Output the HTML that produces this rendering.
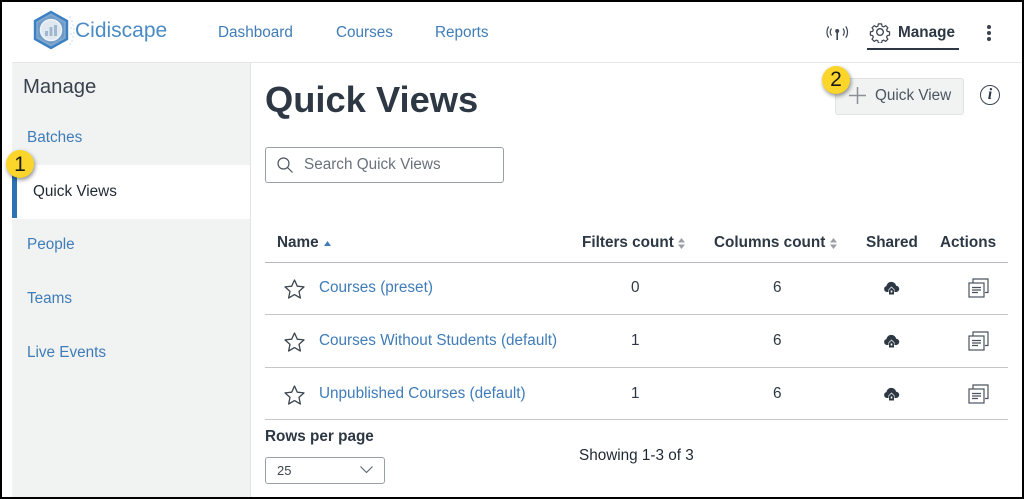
<!DOCTYPE html>
<html><head><meta charset="utf-8">
<style>
html,body{margin:0;padding:0;background:#fff}
#p{position:relative;width:1024px;height:499px;overflow:hidden;background:#fff;font-family:"Liberation Sans",sans-serif;color:#2d3844;font-size:15.3px}
#p div,#p svg{position:absolute}
.t{white-space:nowrap;line-height:18px}
.l{color:#3f7cb8}
.b{font-weight:bold;color:#2d3844}
.h{position:absolute;left:265px;width:743px;height:1px;background:#c4c6c9}
</style></head><body>
<div id="p">
<div style="left:12px;top:63px;width:238px;height:436px;background:#f1f3f3"></div>
<div style="left:12px;top:62px;width:1012px;height:1px;background:#e6e8e8"></div>
<div style="left:250px;top:63px;width:1px;height:436px;background:#e2e4e4"></div>
<div style="left:12px;top:165px;width:238px;height:54px;background:#fff"></div>
<div style="left:12px;top:165px;width:5px;height:53px;background:#2c72b5"></div>

<svg style="left:30px;top:8px" width="46" height="44" viewBox="0 0 46 44">
<g fill="#c3d9ec"><circle cx="40" cy="9" r=".8"/><circle cx="42" cy="13" r=".8"/><circle cx="43" cy="17" r=".8"/><circle cx="44" cy="21" r=".8"/><circle cx="44" cy="25" r=".8"/><circle cx="43" cy="29" r=".8"/><circle cx="42" cy="33" r=".8"/><circle cx="40" cy="36" r=".8"/><circle cx="41" cy="20" r=".8"/><circle cx="41" cy="26" r=".8"/></g>
<polygon points="21,4 37,13 37,31 21,40 5,31 5,13" fill="#7ea6cf" stroke="#3b80c2" stroke-width="2.400"/>
<polygon points="21,8 34,15 34,29 21,36 8,29 8,15" fill="#6f9ac6"/>
<circle cx="21" cy="22" r="10.500" fill="#dfe7ef" stroke="#eef3f7" stroke-width="1.500"/>
<path d="M15 28v-5h3v5zM19.500 28v-9h3v9zM24 28v-11h3v11z" fill="#9fb8cf"/>
</svg>
<div class="t" style="left:75px;top:16px;font-size:21px;line-height:30px;color:#4a8bc4">Cidiscape</div>

<div class="t l" style="left:218px;top:24px">Dashboard</div>
<div class="t l" style="left:336px;top:24px">Courses</div>
<div class="t l" style="left:435px;top:24px">Reports</div>

<svg style="left:826px;top:23px" width="23" height="20" viewBox="0 0 23 20" fill="none" stroke="#3d4651" stroke-width="1.200">
<path d="M5.500 5.500c-1.600 2.200-1.600 5 0 7.200M2.800 3.500c-2.400 3.300-2.400 7.900 0 11.200M17 5.500c1.600 2.200 1.600 5 0 7.200M19.700 3.500c2.400 3.300 2.400 7.900 0 11.200"/>
<circle cx="11.200" cy="8" r="2" fill="#3d4651" stroke="none"/><path d="M11.200 9v8" stroke-width="1.600"/></svg>
<svg style="left:869px;top:21px" width="22" height="22" viewBox="0 0 24 24" fill="none" stroke="#3d4651" stroke-width="1.500" stroke-linejoin="round">
<path d="M10 2h4l.6 2.900 1.900.8 2.500-1.600 2.800 2.800-1.600 2.500.8 1.900 2.900.6v4l-2.900.6-.8 1.900 1.600 2.500-2.800 2.800-2.500-1.600-1.900.8-.6 2.900h-4l-.6-2.900-1.900-.8-2.500 1.600-2.800-2.800 1.600-2.500-.8-1.900-2.900-.6v-4l2.900-.6.8-1.900-1.600-2.500 2.800-2.800 2.500 1.600 1.900-.8z" transform="translate(1.400 1.400) scale(.88)"/><circle cx="12" cy="12" r="3.600"/></svg>
<div class="t b" style="left:898px;top:24px">Manage</div>
<div style="left:867px;top:48px;width:92px;height:2px;background:#2d3844"></div>
<div style="left:987px;top:25px;width:4px;height:4px;border-radius:2px;background:#39434e"></div>
<div style="left:987px;top:31px;width:4px;height:4px;border-radius:2px;background:#39434e"></div>
<div style="left:987px;top:37px;width:4px;height:4px;border-radius:2px;background:#39434e"></div>

<div class="t" style="left:23px;top:75px;font-size:20.300px;line-height:24px;color:#39424c">Manage</div>
<div class="t l" style="left:27px;top:129px">Batches</div>
<div class="t" style="left:33px;top:183px;color:#1f2933">Quick Views</div>
<div class="t l" style="left:27px;top:236px">People</div>
<div class="t l" style="left:27px;top:290px">Teams</div>
<div class="t l" style="left:27px;top:344px">Live Events</div>

<div style="left:6px;top:150px;width:28px;height:28px;border-radius:14px;background:#fbd52a;box-shadow:1px 2px 4px rgba(0,0,0,.45)"></div>
<div class="t" style="left:6px;top:152px;width:28px;text-align:center;font-size:21px;line-height:26px;color:#1a1a1a">1</div>

<div class="t" style="left:265px;top:79px;font-size:36.300px;line-height:42px;font-weight:bold;color:#2d3844">Quick Views</div>

<div style="left:835px;top:78px;width:127px;height:35px;background:#f1f3f3;border:1px solid #dfe1e2;border-radius:3px"></div>
<svg style="left:849px;top:87px" width="17" height="17" viewBox="0 0 17 17" stroke="#8a9097" stroke-width="1.500"><path d="M8.500 0v17M0 8.500h17"/></svg>
<div class="t" style="left:875px;top:87px;color:#4b5560">Quick View</div>
<div style="left:822px;top:66px;width:28px;height:28px;border-radius:14px;background:#fbd52a;box-shadow:1px 2px 4px rgba(0,0,0,.45)"></div>
<div class="t" style="left:822px;top:67px;width:28px;text-align:center;font-size:21px;line-height:26px;color:#1a1a1a">2</div>
<div style="left:980px;top:85px;width:18px;height:18px;border:1.300px solid #3d4651;border-radius:50%"></div>
<div class="t" style="left:980px;top:86px;width:20px;text-align:center;font-family:'Liberation Serif',serif;font-style:italic;font-weight:bold;font-size:16px;color:#2d3844">i</div>

<div style="left:265px;top:147px;width:237px;height:34px;border:1px solid #9a9fa5;border-radius:3px"></div>
<svg style="left:276px;top:156px" width="18" height="18" viewBox="0 0 18 18" fill="none" stroke="#4a535d" stroke-width="1.200"><circle cx="7.500" cy="7.500" r="5.500"/><path d="M11.500 11.500l5 5"/></svg>
<div class="t" style="left:304px;top:156px;color:#6a727b">Search Quick Views</div>

<div class="t b" style="left:277px;top:234px">Name</div>
<svg style="left:324px;top:241px" width="7" height="5"><path d="M0 5L3.500 0 7 5z" fill="#3f7cb8"/></svg>
<div class="t b" style="left:582px;top:234px">Filters count</div>
<svg style="left:678px;top:238px" width="7" height="11" fill="#9a9fa5"><path d="M0 4.500L3.500 0 7 4.500zM0 6.500L3.500 11 7 6.500z"/></svg>
<div class="t b" style="left:714px;top:234px">Columns count</div>
<svg style="left:830px;top:238px" width="7" height="11" fill="#9a9fa5"><path d="M0 4.500L3.500 0 7 4.500zM0 6.500L3.500 11 7 6.500z"/></svg>
<div class="t b" style="left:866px;top:234px">Shared</div>
<div class="t b" style="left:940px;top:234px">Actions</div>

<div class="h" style="top:262px;background:#b4b7bb"></div>
<div class="h" style="top:314px"></div>
<div class="h" style="top:367px"></div>
<div class="h" style="top:419px"></div>

<svg style="left:284px;top:279px" width="21" height="20" viewBox="0 0 21 20" fill="none" stroke="#3d4651" stroke-width="1.300" stroke-linejoin="round"><path d="M10.500 1l2.800 6.200 6.700.7-5 4.500 1.400 6.600-5.900-3.400-5.900 3.400 1.400-6.600-5-4.500 6.700-.7z"/></svg>
<svg style="left:284px;top:332px" width="21" height="20" viewBox="0 0 21 20" fill="none" stroke="#3d4651" stroke-width="1.300" stroke-linejoin="round"><path d="M10.500 1l2.800 6.200 6.700.7-5 4.500 1.400 6.600-5.900-3.400-5.900 3.400 1.400-6.600-5-4.500 6.700-.7z"/></svg>
<svg style="left:284px;top:385px" width="21" height="20" viewBox="0 0 21 20" fill="none" stroke="#3d4651" stroke-width="1.300" stroke-linejoin="round"><path d="M10.500 1l2.800 6.200 6.700.7-5 4.500 1.400 6.600-5.900-3.400-5.900 3.400 1.400-6.600-5-4.500 6.700-.7z"/></svg>

<div class="t l" style="left:319px;top:279px">Courses (preset)</div>
<div class="t l" style="left:319px;top:332px">Courses Without Students (default)</div>
<div class="t l" style="left:319px;top:385px">Unpublished Courses (default)</div>

<div class="t" style="left:631px;top:279px">0</div>
<div class="t" style="left:631px;top:332px">1</div>
<div class="t" style="left:631px;top:385px">1</div>
<div class="t" style="left:773px;top:279px">6</div>
<div class="t" style="left:773px;top:332px">6</div>
<div class="t" style="left:773px;top:385px">6</div>

<svg style="left:883px;top:281px" width="17" height="14" viewBox="0 0 17 14"><path d="M4 11a3 3 0 0 1-.6-5.900 5 5 0 0 1 9.800-.4A3.100 3.100 0 0 1 13 11h-1.500V8.500L8.500 5.500l-3 3V11z" fill="#2d3844"/><path d="M6 13.500V9l2.500-2.500L11 9v4.500z" fill="#2d3844"/><rect x="7.700" y="9.500" width="1.600" height="2" fill="#fff"/></svg>
<svg style="left:883px;top:334px" width="17" height="14" viewBox="0 0 17 14"><path d="M4 11a3 3 0 0 1-.6-5.900 5 5 0 0 1 9.800-.4A3.100 3.100 0 0 1 13 11h-1.500V8.500L8.500 5.500l-3 3V11z" fill="#2d3844"/><path d="M6 13.500V9l2.500-2.500L11 9v4.500z" fill="#2d3844"/><rect x="7.700" y="9.500" width="1.600" height="2" fill="#fff"/></svg>
<svg style="left:883px;top:387px" width="17" height="14" viewBox="0 0 17 14"><path d="M4 11a3 3 0 0 1-.6-5.900 5 5 0 0 1 9.800-.4A3.100 3.100 0 0 1 13 11h-1.500V8.500L8.500 5.500l-3 3V11z" fill="#2d3844"/><path d="M6 13.500V9l2.500-2.500L11 9v4.500z" fill="#2d3844"/><rect x="7.700" y="9.500" width="1.600" height="2" fill="#fff"/></svg>

<svg style="left:968px;top:278px" width="21" height="20" viewBox="0 0 21 20" fill="none" stroke="#4a535d" stroke-width="1.200"><path d="M5 4.500V1h15v13.500h-3"/><rect x="1" y="5" width="15" height="14"/><path d="M4 9.500h9M4 12h9M4 14.500h6"/></svg>
<svg style="left:968px;top:331px" width="21" height="20" viewBox="0 0 21 20" fill="none" stroke="#4a535d" stroke-width="1.200"><path d="M5 4.500V1h15v13.500h-3"/><rect x="1" y="5" width="15" height="14"/><path d="M4 9.500h9M4 12h9M4 14.500h6"/></svg>
<svg style="left:968px;top:384px" width="21" height="20" viewBox="0 0 21 20" fill="none" stroke="#4a535d" stroke-width="1.200"><path d="M5 4.500V1h15v13.500h-3"/><rect x="1" y="5" width="15" height="14"/><path d="M4 9.500h9M4 12h9M4 14.500h6"/></svg>

<div class="t b" style="left:265px;top:428px">Rows per page</div>
<div style="left:265px;top:457px;width:118px;height:25px;border:1px solid #9a9fa5;border-radius:3px"></div>
<div class="t" style="left:277px;top:462px;font-size:13px;color:#3d4651">25</div>
<svg style="left:360px;top:466px" width="13" height="8" fill="none" stroke="#5a636c" stroke-width="1.100"><path d="M.5 .5L6.500 6.500 12.500 .5"/></svg>
<div class="t" style="left:579px;top:447px;color:#1f2933">Showing 1-3 of 3</div>

<div style="left:0;top:0;width:1024px;height:2px;background:#000"></div>
<div style="left:0;top:497px;width:1024px;height:2px;background:#000"></div>
<div style="left:0;top:0;width:2px;height:499px;background:#000"></div>
<div style="left:1022px;top:0;width:2px;height:499px;background:#000"></div>
</div>
</body></html>
